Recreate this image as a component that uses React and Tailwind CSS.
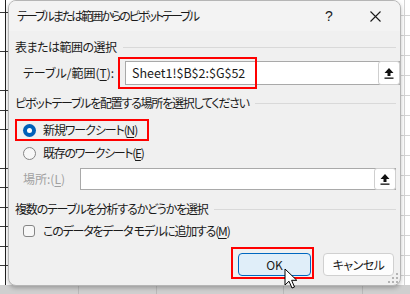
import React from "react";

const jp = { fontFamily: '"Noto Sans CJK JP", "Noto Sans", sans-serif' };

function UploadIcon() {
  return (
    <svg width="10" height="11" viewBox="0 0 10 11">
      <path d="M5 0 L9.5 5 L6.5 5 L6.5 8 L3.5 8 L3.5 5 L0.5 5 Z" fill="#111" />
      <rect x="0.5" y="9.5" width="9" height="1.3" fill="#111" />
    </svg>
  );
}

function RefInput({ width, text }) {
  return (
    <div className={`flex h-full ${width} bg-white border border-[#a9a9a9]`}>
      <div className="flex-1 flex items-center pl-[6px] text-[12.5px] text-[#1a1a1a] leading-none">{text}</div>
      <div className="w-[22px] flex items-center justify-center bg-white border border-[#cfcfcf] rounded-[3px] -my-px -mr-px h-[calc(100%+2px)]">
        <UploadIcon />
      </div>
    </div>
  );
}

function Header({ children, track }) {
  return (
    <div className="flex items-center h-[20px] pr-[4px]">
      <span className={`text-[12px] text-[#1a1a1a] whitespace-nowrap ${track}`}>{children}</span>
      <div className="flex-1 h-px bg-[#d9d9d9] ml-[6px]" />
    </div>
  );
}

const U = ({ children }) => <span className="underline underline-offset-2">{children}</span>;

export default function App() {
  return (
    <div
      className="relative w-[410px] h-[294px] overflow-hidden bg-white [font-feature-settings:'palt']"
      style={jp}
    >
      {/* worksheet behind */}
      <div className="absolute inset-0 bg-[repeating-linear-gradient(to_bottom,transparent_0px,transparent_12px,#3a3a3a_12px,#3a3a3a_13px,transparent_13px,transparent_19.5px)]" />
      <div className="absolute left-[5px] top-0 w-px h-full bg-[#222]" />
      <div className="absolute right-0 top-0 w-[9px] h-full bg-white bg-[repeating-linear-gradient(to_bottom,transparent_0px,transparent_15px,#d4d4d4_15px,#d4d4d4_16px,transparent_16px,transparent_20px)]" />
      <div className="absolute right-[5px] top-0 w-px h-full bg-[#d4d4d4]" />
      <div className="absolute left-0 bottom-0 w-full h-[9px] bg-[#cfcfcf]">
        <div className="absolute left-[78px] top-0 w-px h-full bg-[#b9b9b9]" />
        <div className="absolute left-[156px] top-0 w-px h-full bg-[#b9b9b9]" />
        <div className="absolute left-[283px] top-0 w-px h-full bg-[#b9b9b9]" />
        <div className="absolute left-[362px] top-0 w-px h-full bg-[#b9b9b9]" />
      </div>

      {/* dialog */}
      <div className="absolute left-[8px] top-0 w-[393px] h-[286px] rounded-[8px] bg-[#f0f0f0] border border-[#b5b5b5] shadow-[0_2px_4px_rgba(0,0,0,0.25)] flex flex-col overflow-hidden">
        {/* title bar */}
        <div className="h-[30px] flex items-center bg-[#f3f3f3] shrink-0">
          <span className="pl-[8px] text-[12px] text-[#1a1a1a] flex-1 tracking-[-2px]">テーブルまたは範囲からのピボットテーブル</span>
          <span className="w-[46px] text-center text-[14px] text-[#1a1a1a]" style={{ fontFamily: '"Liberation Sans", sans-serif' }}>?</span>
          <span className="w-[46px] flex items-center justify-center mr-[2px]">
            <svg width="11" height="11" viewBox="0 0 11 11">
              <path d="M0.5 0.5 L10.5 10.5 M10.5 0.5 L0.5 10.5" stroke="#1a1a1a" strokeWidth="1.1" />
            </svg>
          </span>
        </div>

        {/* body */}
        <div className="flex flex-col pl-[6px]">
          <div className="mt-[6px]">
            <Header track="tracking-[-0.5px]">表または範囲の選択</Header>
          </div>
          <div className="relative flex items-center h-[32px]">
            <span className="pl-[8px] w-[112px] text-[12px] text-[#1a1a1a] whitespace-nowrap">
              テーブル/範囲(<U>T</U>):
            </span>
            <div className="h-[24px]">
              <RefInput width="w-[275px]" text="Sheet1!$B$2:$G$52" />
            </div>
            <div className="absolute left-[103px] top-0 w-[139px] h-[32px] border-2 border-[#ff0000]" />
          </div>

          <div className="mt-[4px]">
            <Header track="tracking-[-1.25px]">ピボットテーブルを配置する場所を選択してください</Header>
          </div>
          <div className="relative flex items-center h-[22px] mt-[6px]">
            <div className="ml-[8px] w-[13px] h-[13px] rounded-full bg-[#005fb8] flex items-center justify-center">
              <div className="w-[5px] h-[5px] rounded-full bg-white" />
            </div>
            <span className="ml-[7px] text-[12px] text-[#1a1a1a] tracking-[-1.1px]">
              新規ワークシート(<U>N</U>)
            </span>
            <div className="absolute left-0 top-0 w-[134px] h-[22px] border-2 border-[#ff0000]" />
          </div>
          <div className="flex items-center h-[22px] mt-[1px]">
            <div className="ml-[8px] w-[13px] h-[13px] rounded-full border border-[#858585] bg-[#f7f7f7]" />
            <span className="ml-[7px] text-[12px] text-[#1a1a1a] tracking-[-1.3px]">
              既存のワークシート(<U>E</U>)
            </span>
          </div>
          <div className="flex items-center h-[22px] mt-[4px]">
            <span className="pl-[8px] w-[65px] text-[12px] text-[#a0a0a0] whitespace-nowrap">
              場所:(<U>L</U>)
            </span>
            <div className="h-[22px]">
              <RefInput width="w-[316px]" text="" />
            </div>
          </div>

          <div className="mt-[9px]">
            <Header track="tracking-[-1.2px]">複数のテーブルを分析するかどうかを選択</Header>
          </div>
          <div className="flex items-center h-[20px] mt-[2px]">
            <div className="ml-[8px] w-[12px] h-[12px] rounded-[3px] border border-[#858585] bg-[#f7f7f7]" />
            <span className="ml-[8px] text-[12px] text-[#1a1a1a] tracking-[-1.2px]">
              このデータをデータ モデルに追加する(<U>M</U>)
            </span>
          </div>

          <div className="flex justify-end items-center mt-[12px] pr-[6px] gap-[12px]">
            <div className="relative">
              <div className="w-[73px] h-[23px] rounded-[4px] bg-[#e0eef9] border border-[#0067c0] flex items-center justify-center text-[12px] text-[#1a1a1a]">
                OK
              </div>
              <div className="absolute -left-[7px] -top-[6px] w-[83px] h-[32px] border-2 border-[#ff0000]" />
            </div>
            <div className="w-[71px] h-[23px] rounded-[4px] bg-[#fdfdfd] border border-[#d0d0d0] flex items-center justify-center text-[12px] text-[#1a1a1a] tracking-[-0.5px]">
              キャンセル
            </div>
          </div>
        </div>

        {/* resize grip */}
        <svg className="absolute right-[2px] bottom-[2px]" width="10" height="10" viewBox="0 0 10 10">
          <g fill="#b4b4b4">
            <rect x="8" y="8" width="2" height="2" />
            <rect x="4" y="8" width="2" height="2" />
            <rect x="0" y="8" width="2" height="2" />
            <rect x="8" y="4" width="2" height="2" />
            <rect x="4" y="4" width="2" height="2" />
            <rect x="8" y="0" width="2" height="2" />
          </g>
        </svg>
      </div>

      {/* mouse cursor */}
      <svg className="absolute left-[284px] top-[268px]" width="14" height="22" viewBox="0 0 14 22">
        <path d="M1 1 L1 17 L5 13.2 L8 20 L10.5 19 L7.6 12.3 L12.8 12.3 Z" fill="#fff" stroke="#000" strokeWidth="1" strokeLinejoin="round" />
      </svg>
    </div>
  );
}
